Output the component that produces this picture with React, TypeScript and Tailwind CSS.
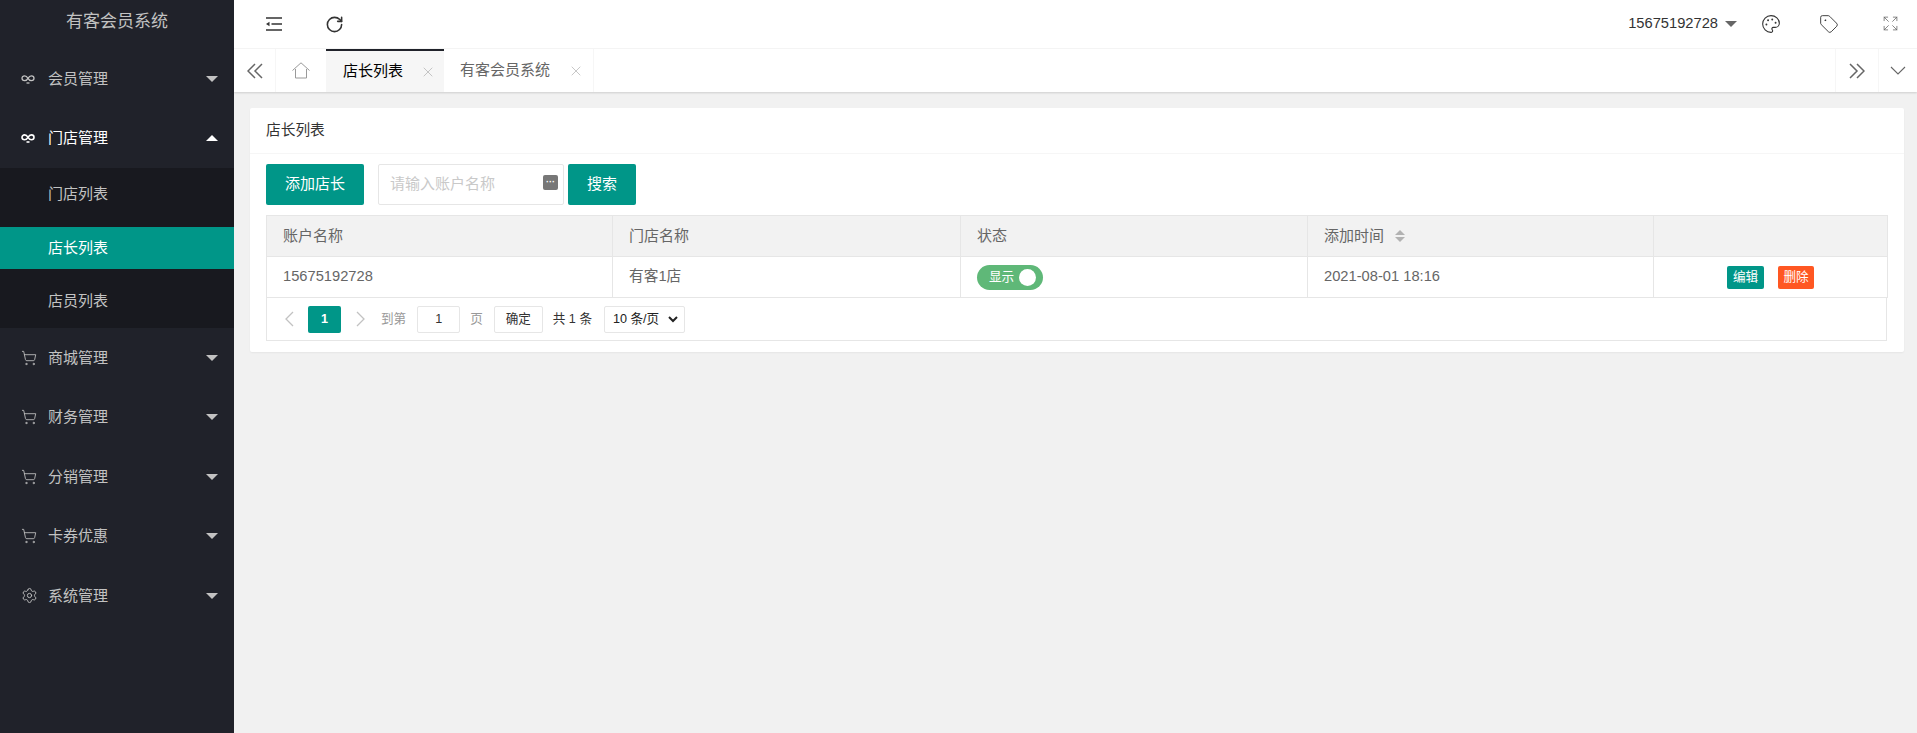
import { Expand, Palette, RotateCw, Settings, ShoppingCart, Tag, X } from 'lucide-react';

const FONT = "font-['Liberation_Sans','Noto_Sans_CJK_SC',sans-serif]";

// thin chevrons like the layui icon font
function Chev({ d, w, h, sw = 1.3 }: { d: string; w: number; h: number; sw?: number }) {
  return (
    <svg width={w} height={h} viewBox={`0 0 ${w} ${h}`} fill="none" stroke="currentColor" strokeWidth={sw}>
      <path d={d} />
    </svg>
  );
}

function InfinityIcon({ active }: { active?: boolean }) {
  return (
    <svg width="14" height="14" viewBox="0 0 14 14" fill="none" stroke="currentColor" strokeWidth={active ? 1.6 : 1.3} className={active ? 'text-white' : 'text-[#c2c2c2]'}>
      <path d="M7 6.3C6 4.6 5 3.9 3.6 3.9 2.2 3.9 1 4.9 1 6.3s1.2 2.4 2.6 2.4C5 8.7 6 8 7 6.3c1-1.7 2-2.4 3.4-2.4C11.8 3.9 13 4.9 13 6.3s-1.2 2.4-2.6 2.4C9 8.7 8 8 7 6.3z" />
      <path d="M5.5 11h3" />
    </svg>
  );
}

function Caret({ up, color }: { up?: boolean; color: string }) {
  return up ? (
    <span className={`h-0 w-0 border-x-[6.5px] border-b-[6.5px] border-x-transparent ${color}`} />
  ) : (
    <span className={`h-0 w-0 border-x-[6.5px] border-t-[6.5px] border-x-transparent ${color}`} />
  );
}

function MenuItem({ label, icon, open }: { label: string; icon: 'inf' | 'cart' | 'gear'; open?: boolean }) {
  return (
    <div className={`flex h-[59.5px] items-center pl-[21px] pr-[16px] text-[15px] ${open ? 'text-white' : 'text-[#c2c2c2]'}`}>
      <span className="flex w-[27px] items-center">
        {icon === 'inf' && <InfinityIcon active={open} />}
        {icon === 'cart' && <ShoppingCart size={16} strokeWidth={1.3} />}
        {icon === 'gear' && <Settings size={17} strokeWidth={1.3} />}
      </span>
      <span>{label}</span>
      <span className="ml-auto flex">
        <Caret up={open} color={open ? 'border-b-white' : 'border-t-[#c2c2c2]'} />
      </span>
    </div>
  );
}

function Sidebar() {
  return (
    <aside className="flex w-[234px] shrink-0 flex-col bg-[#20222a]">
      <div className="flex h-[49px] items-center justify-center pb-[5px] text-[17px] text-[#c2c2c2]">有客会员系统</div>
      <MenuItem label="会员管理" icon="inf" />
      <MenuItem label="门店管理" icon="inf" open />
      <div className="flex flex-col bg-[#18191f] text-[15px]">
        <div className="flex h-[59px] items-start pl-[48px] pt-[15px] text-[#c2c2c2]">门店列表</div>
        <div className="flex h-[42px] items-center bg-[#009688] pl-[48px] text-white">店长列表</div>
        <div className="flex h-[59px] items-start pl-[48px] pt-[21px] text-[#c2c2c2]">店员列表</div>
      </div>
      <MenuItem label="商城管理" icon="cart" />
      <MenuItem label="财务管理" icon="cart" />
      <MenuItem label="分销管理" icon="cart" />
      <MenuItem label="卡券优惠" icon="cart" />
      <MenuItem label="系统管理" icon="gear" />
    </aside>
  );
}

function TopBar() {
  return (
    <div className="flex h-[49px] items-center border-b border-[#f6f6f6] bg-white text-[#333]">
      <span className="ml-[32px] flex w-[59px]">
        <svg width="16" height="16" viewBox="0 0 16 16" fill="none" stroke="currentColor" strokeWidth="1.5">
          <path d="M0 2h16M5.5 8H16M0 14h16" />
          <path d="M0 8l3.5-2.2v4.4z" fill="currentColor" stroke="none" />
        </svg>
      </span>
      <RotateCw size={19} strokeWidth={2} />
      <div className="ml-auto flex items-center">
        <span className="mb-[2px] text-[14.7px]">15675192728</span>
        <span className="ml-[7px] h-0 w-0 border-x-[6px] border-t-[6px] border-x-transparent border-t-[#666]" />
        <Palette size={20} strokeWidth={1.3} className="ml-[24px]" />
        <Tag size={20} strokeWidth={1.1} className="ml-[38px]" />
        <Expand size={17} strokeWidth={1.1} className="ml-[43px] mr-[18px] text-[#666]" />
      </div>
    </div>
  );
}

function TabBar() {
  return (
    <div className="z-10 flex h-[43px] bg-white text-[15px] shadow-[0_1px_2px_rgba(0,0,0,0.15)]">
      <span className="flex w-[42px] items-center justify-center border-r border-[#f6f6f6] text-[#666]">
        <Chev w={16} h={16} sw={1.5} d="M8 1L1 8l7 7M15 1L8 8l7 7" />
      </span>
      <span className="flex w-[50px] items-center justify-center text-[#999]">
        <svg width="18" height="17" viewBox="0 0 18 17" fill="none" stroke="currentColor" strokeWidth="1">
          <path d="M0.5 8.5L9 0.8l8.5 7.7M3.5 7v9h11V7" />
        </svg>
      </span>
      <div className="flex w-[118px] items-center border-t-2 border-[#20222a] bg-[#f6f6f6] pl-[17px] text-black">
        店长列表
        <X size={16} strokeWidth={1} className="ml-[17px] text-[#aaa]" />
      </div>
      <div className="flex w-[150px] items-center border-r border-[#f6f6f6] pl-[16px] text-[#666]">
        有客会员系统
        <X size={16} strokeWidth={1} className="ml-[18px] text-[#aaa]" />
      </div>
      <span className="ml-auto flex w-[43px] items-center justify-center border-l border-[#f6f6f6] text-[#666]">
        <Chev w={16} h={16} sw={1.5} d="M1 1l7 7-7 7M8 1l7 7-7 7" />
      </span>
      <span className="flex w-[39px] items-center justify-center border-l border-[#f6f6f6] text-[#666]">
        <Chev w={16} h={9} sw={1.1} d="M1 1l7 7 7-7" />
      </span>
    </div>
  );
}

const headers = ['账户名称', '门店名称', '状态', '添加时间', ''];
const colWidths = ['w-[346px]', 'w-[348px]', 'w-[347px]', 'w-[346px]', 'w-[234px]'];

function Table() {
  return (
    <table className="w-full table-fixed border-collapse text-[15px] text-[#666]">
      <colgroup>
        {colWidths.map(c => <col key={c} className={c} />)}
      </colgroup>
      <thead>
        <tr className="h-[41px] bg-[#f2f2f2]">
          {headers.map((h, i) => (
            <th key={i} className="border border-[#e6e6e6] px-[16px] text-left font-normal">
              <span className="flex items-center">
                {h}
                {h === '添加时间' && (
                  <span className="ml-[11px] flex flex-col gap-[2px]">
                    <span className="h-0 w-0 border-x-[5.5px] border-b-[5px] border-x-transparent border-b-[#b2b2b2]" />
                    <span className="h-0 w-0 border-x-[5.5px] border-t-[5px] border-x-transparent border-t-[#b2b2b2]" />
                  </span>
                )}
              </span>
            </th>
          ))}
        </tr>
      </thead>
      <tbody>
        <tr className="h-[41px]">
          <td className="border border-[#e6e6e6] px-[16px] pb-[2px] text-[14.7px]">15675192728</td>
          <td className="border border-[#e6e6e6] px-[16px] pb-[2px] text-[14.7px]">有客1店</td>
          <td className="border border-[#e6e6e6] px-[16px]">
            <span className="flex h-[25px] w-[66px] items-center justify-between rounded-full bg-[#5fb878] pl-[12px] pr-[7px] text-[12.6px] text-white">
              显示
              <span className="h-[17px] w-[17px] rounded-full bg-white" />
            </span>
          </td>
          <td className="border border-[#e6e6e6] px-[16px] pb-[2px] text-[14.7px]">2021-08-01 18:16</td>
          <td className="border border-[#e6e6e6] px-[16px]">
            <div className="flex justify-center gap-[14px] text-[12.6px] text-white">
              <span className="flex h-[23px] w-[37px] items-center justify-center rounded-[2px] bg-[#009688]">编辑</span>
              <span className="flex h-[23px] w-[36px] items-center justify-center rounded-[2px] bg-[#ff5722]">删除</span>
            </div>
          </td>
        </tr>
      </tbody>
    </table>
  );
}

function Pager() {
  return (
    <div className="flex h-[43px] items-center border-x border-b border-[#e6e6e6] pl-[17px] text-[12.6px] text-[#999]">
      <span className="text-[#c2c2c2]"><Chev w={10} h={16} d="M9 1L2 8l7 7" /></span>
      <span className="ml-[14px] flex h-[27px] w-[33px] items-center justify-center rounded-[2px] bg-[#009688] font-bold text-white">1</span>
      <span className="ml-[15px] text-[#c2c2c2]"><Chev w={10} h={16} d="M1 1l7 7-7 7" /></span>
      <span className="ml-[15px]">到第</span>
      <span className="ml-[11px] flex h-[27px] w-[43px] items-center justify-center rounded-[2px] border border-[#e6e6e6] text-[#333]">1</span>
      <span className="ml-[10px]">页</span>
      <span className="ml-[11px] flex h-[27px] w-[49px] items-center justify-center rounded-[2px] border border-[#e6e6e6] text-[#333]">确定</span>
      <span className="ml-[10px] text-[#333]">共 1 条</span>
      <span className="ml-[12px] flex h-[27px] w-[81px] items-center justify-between rounded-[2px] border border-[#e6e6e6] pl-[8px] pr-[6px] text-[#222]">
        10 条/页
        <Chev w={10} h={7} sw={2} d="M1 1l4 4 4-4" />
      </span>
    </div>
  );
}

function Card() {
  return (
    <div className="ml-[16px] mr-[13px] mt-[16px] rounded-[2px] bg-white shadow-[0_1px_2px_rgba(0,0,0,0.05)]">
      <div className="flex h-[46px] items-center border-b border-[#f6f6f6] px-[16px] text-[14.7px] text-[#333]">店长列表</div>
      <div className="pb-[11px] pl-[16px] pr-[17px] pt-[10px]">
        <div className="flex h-[41px] text-[15px]">
          <span className="flex w-[98px] items-center justify-center rounded-[2px] bg-[#009688] text-white">添加店长</span>
          <div className="relative ml-[14px] flex w-[186px] items-center rounded-[2px] border border-[#e6e6e6] pl-[11px] text-[#c9c9c9]">
            请输入账户名称
            <span className="absolute right-[5px] top-[10px] flex h-[15px] w-[15px] items-center justify-center rounded-[2px] bg-[#777] text-[9px] font-bold leading-none text-white">···</span>
          </div>
          <span className="ml-[4px] flex w-[68px] items-center justify-center rounded-[2px] bg-[#009688] text-white">搜索</span>
        </div>
        <div className="mt-[10px]">
          <Table />
          <Pager />
        </div>
      </div>
    </div>
  );
}

export default function App() {
  return (
    <div className={`flex h-[733px] overflow-hidden bg-[#f1f1f1] ${FONT}`}>
      <Sidebar />
      <main className="flex min-w-0 flex-1 flex-col">
        <TopBar />
        <TabBar />
        <Card />
      </main>
    </div>
  );
}
